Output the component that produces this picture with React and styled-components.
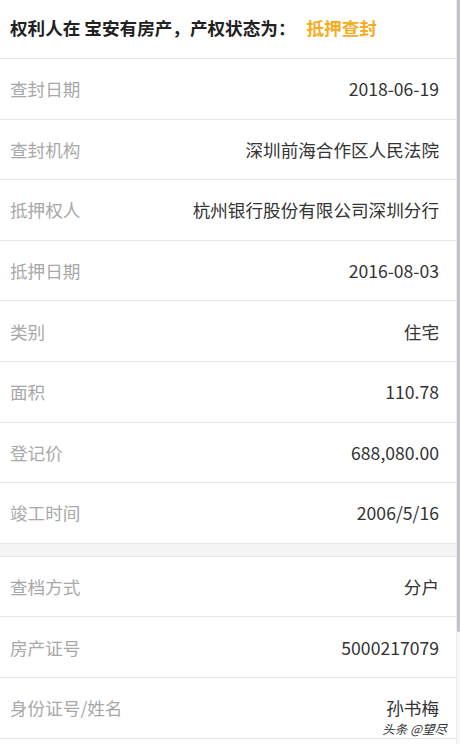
import React from "react";
import styled, { createGlobalStyle } from "styled-components";

const Global = createGlobalStyle`
  html, body { margin: 0; padding: 0; background: #fff; overflow: hidden; }
  body { font-family: "Noto Sans CJK SC", "Noto Sans", sans-serif; }
  * { box-sizing: border-box; }
`;

const Page = styled.div`
  display: flex;
  width: 460px;
  height: 744px;
  background: #fff;
`;

const Main = styled.div`
  width: 456px;
  display: flex;
  flex-direction: column;
`;

const Edge = styled.div`
  width: 1px;
  background: #ececec;
`;

const Track = styled.div`
  width: 3px;
  display: flex;
  flex-direction: column;
  background: #f7f7f7;
`;

const Thumb = styled.div`
  height: 632px;
  background: #c2c2c6;
  border-radius: 0 0 2px 2px;
`;

const Header = styled.div`
  height: 59px;
  border-bottom: 1px solid #e4e4e4;
  display: flex;
  align-items: center;
  padding: 0 0 3px 10px;
  font-size: 17.6px;
  line-height: 1.2;
  font-weight: 700;
  color: #222;
  white-space: pre;
`;

const Status = styled.span`
  color: #f5ac1f;
  margin-left: 11px;
`;

const Row = styled.div`
  position: relative;
  height: 60.6px;
  border-bottom: 1px solid #e6e6e6;
  display: flex;
  align-items: center;
  justify-content: space-between;
  padding: 0 17px 0 10px;
  font-size: 17.6px;
  line-height: 1.2;
`;

const Label = styled.span`
  color: #a8a8a8;
`;

const Value = styled.span`
  color: #333;
`;

const Gap = styled.div`
  height: 13px;
  background: #f4f4f4;
  border-bottom: 1px solid #e6e6e6;
`;

const Watermark = styled.span`
  position: absolute;
  right: 9px;
  bottom: 3px;
  font-size: 12.5px;
  line-height: 13px;
  color: #333;
  font-style: italic;
`;

const groupA = [
  ["查封日期", "2018-06-19"],
  ["查封机构", "深圳前海合作区人民法院"],
  ["抵押权人", "杭州银行股份有限公司深圳分行"],
  ["抵押日期", "2016-08-03"],
  ["类别", "住宅"],
  ["面积", "110.78"],
  ["登记价", "688,080.00"],
  ["竣工时间", "2006/5/16"],
];

const groupB = [
  ["查档方式", "分户"],
  ["房产证号", "5000217079"],
  ["身份证号/姓名", "孙书梅"],
];

export default function App() {
  return (
    <>
      <Global />
      <Page>
        <Main>
          <Header>
            权利人在 宝安有房产，产权状态为：<Status>抵押查封</Status>
          </Header>
          {groupA.map(([l, v]) => (
            <Row key={l}>
              <Label>{l}</Label>
              <Value>{v}</Value>
            </Row>
          ))}
          <Gap />
          {groupB.map(([l, v], i) => (
            <Row key={l}>
              <Label>{l}</Label>
              <Value>{v}</Value>
              {i === groupB.length - 1 && <Watermark>头条 @望尽</Watermark>}
            </Row>
          ))}
        </Main>
        <Edge />
        <Track>
          <Thumb />
        </Track>
      </Page>
    </>
  );
}
